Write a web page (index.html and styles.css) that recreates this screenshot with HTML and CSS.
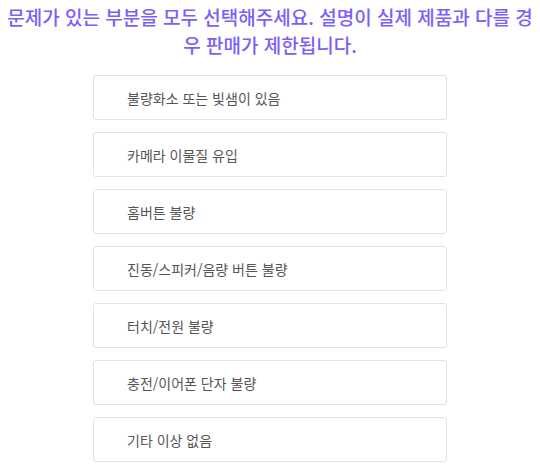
FILE: index.html
```html
<!DOCTYPE html>
<html lang="ko">
<head>
<meta charset="utf-8">
<link rel="stylesheet" href="styles.css">
</head>
<body>
<div class="page">
  <h1 class="title">문제가 있는 부분을 모두 선택해주세요. 설명이 실제 제품과 다를 경우 판매가 제한됩니다.</h1>
  <ul class="options">
    <li class="option">불량화소 또는 빛샘이 있음</li>
    <li class="option">카메라 이물질 유입</li>
    <li class="option">홈버튼 불량</li>
    <li class="option">진동/스피커/음량 버튼 불량</li>
    <li class="option">터치/전원 불량</li>
    <li class="option">충전/이어폰 단자 불량</li>
    <li class="option">기타 이상 없음</li>
  </ul>
</div>
</body>
</html>
```
FILE: styles.css
```css
html, body {
  margin: 0;
  padding: 0;
  background: #fff;
}
body {
  font-family: "Noto Sans CJK KR", "Noto Sans", sans-serif;
}
.page {
  padding: 3px 6px 0;
}
.title {
  margin: 0;
  font-size: 19px;
  font-weight: 500;
  line-height: 28px;
  color: #7d5ef8;
  text-align: center;
  word-break: break-all;
}
.options {
  list-style: none;
  margin: 16px auto 0;
  padding: 0;
  width: 354px;
  display: flex;
  flex-direction: column;
  gap: 12px;
}
.option {
  box-sizing: border-box;
  height: 45px;
  border: 1px solid #e2e2e2;
  border-radius: 3px;
  padding-left: 33px;
  display: flex;
  align-items: center;
  font-size: 14px;
  color: #555;
}
```
